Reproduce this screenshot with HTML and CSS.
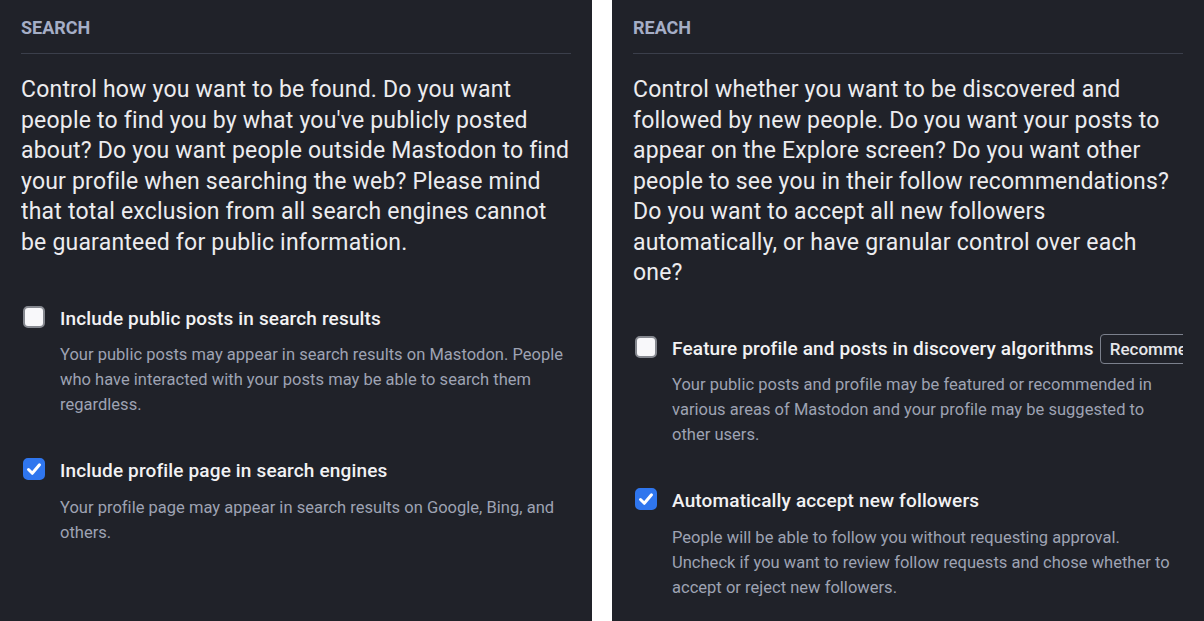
FILE: index.html
```html
<!DOCTYPE html>
<html lang="en">
<head>
<meta charset="utf-8">
<title>Privacy settings</title>
<link rel="stylesheet" href="styles.css">
</head>
<body>
<div class="page">
  <section class="panel">
    <div class="inner">
      <h2 class="heading">Search</h2>
      <p class="lead">Control how you want to be found. Do you want people to find you by what you've publicly posted about? Do you want people outside Mastodon to find your profile when searching the web? Please mind that total exclusion from all search engines cannot be guaranteed for public information.</p>
      <div class="item">
        <div class="label-row">
          <span class="box"></span>
          <span class="label">Include public posts in search results</span>
        </div>
        <p class="hint">Your public posts may appear in search results on Mastodon. People who have interacted with your posts may be able to search them regardless.</p>
      </div>
      <div class="item">
        <div class="label-row">
          <span class="box checked"><svg viewBox="0 0 22 22" width="22" height="22"><path d="M5.5 11.5 L9.3 15.3 L16.5 6.8" fill="none" stroke="#fff" stroke-width="3" stroke-linecap="round" stroke-linejoin="round"/></svg></span>
          <span class="label">Include profile page in search engines</span>
        </div>
        <p class="hint">Your profile page may appear in search results on Google, Bing, and others.</p>
      </div>
    </div>
  </section>
  <section class="panel">
    <div class="inner">
      <h2 class="heading">Reach</h2>
      <p class="lead">Control whether you want to be discovered and followed by new people. Do you want your posts to appear on the Explore screen? Do you want other people to see you in their follow recommendations? Do you want to accept all new followers automatically, or have granular control over each one?</p>
      <div class="item">
        <div class="label-row">
          <span class="box"></span>
          <span class="label">Feature profile and posts in discovery algorithms</span>
          <span class="badge">Recommended</span>
        </div>
        <p class="hint">Your public posts and profile may be featured or recommended in various areas of Mastodon and your profile may be suggested to other users.</p>
      </div>
      <div class="item">
        <div class="label-row">
          <span class="box checked"><svg viewBox="0 0 22 22" width="22" height="22"><path d="M5.5 11.5 L9.3 15.3 L16.5 6.8" fill="none" stroke="#fff" stroke-width="3" stroke-linecap="round" stroke-linejoin="round"/></svg></span>
          <span class="label">Automatically accept new followers</span>
        </div>
        <p class="hint">People will be able to follow you without requesting approval. Uncheck if you want to review follow requests and chose whether to accept or reject new followers.</p>
      </div>
    </div>
  </section>
</div>
</body>
</html>
```

FILE: styles.css
```css
html, body {
  margin: 0;
  padding: 0;
  background: #ffffff;
}
body {
  font-family: Roboto, "Noto Sans", "Liberation Sans", sans-serif;
}
.page {
  display: flex;
  gap: 20px;
  width: 1204px;
  height: 621px;
  overflow: hidden;
}
.panel {
  width: 592px;
  flex: 0 0 592px;
  height: 621px;
  background: #202229;
  padding: 16px 21px 0 21px;
  box-sizing: border-box;
}
.inner {
  width: 550px;
  overflow: hidden;
}
.heading {
  margin: 0;
  font-size: 18px;
  line-height: 24px;
  font-weight: 700;
  text-transform: uppercase;
  color: #a5aec6;
  padding-bottom: 13px;
  border-bottom: 1px solid #3b3f4b;
}
.lead {
  margin: 21px 0 0 0;
  font-size: 23px;
  letter-spacing: 0.2px;
  line-height: 30.5px;
  color: #ececef;
}
.item {
  margin-top: 48px;
}
.item + .item {
  margin-top: 41.5px;
}
.item + .item .hint {
  margin-top: 12.5px;
}
.label-row {
  display: flex;
  align-items: center;
  white-space: nowrap;
  height: 24px;
}
.box {
  flex: 0 0 auto;
  box-sizing: border-box;
  width: 22px;
  height: 22px;
  margin-left: 2px;
  margin-right: 15px;
  margin-top: -3px;
  border-radius: 5px;
  background: #f8f8fa;
  border: 2px solid #85888f;
  display: flex;
  align-items: center;
  justify-content: center;
}
.box.checked {
  background: #2f76ee;
  border-color: #2f76ee;
}
.box svg {
  width: 22px;
  height: 22px;
  flex: 0 0 auto;
}
.label {
  font-size: 19px;
  letter-spacing: 0.15px;
  font-weight: 500;
  color: #f2f2f4;
}
.badge {
  margin-left: 6px;
  border: 1px solid #7b808c;
  border-radius: 4px;
  padding: 0 9px;
  height: 28px;
  line-height: 28px;
  font-size: 17px;
  font-weight: 500;
  color: #e6e6ea;
}
.hint {
  margin: 11.5px 0 0 39px;
  font-size: 16.5px;
  letter-spacing: 0.02px;
  line-height: 25px;
  color: #9ea3b3;
}
```
